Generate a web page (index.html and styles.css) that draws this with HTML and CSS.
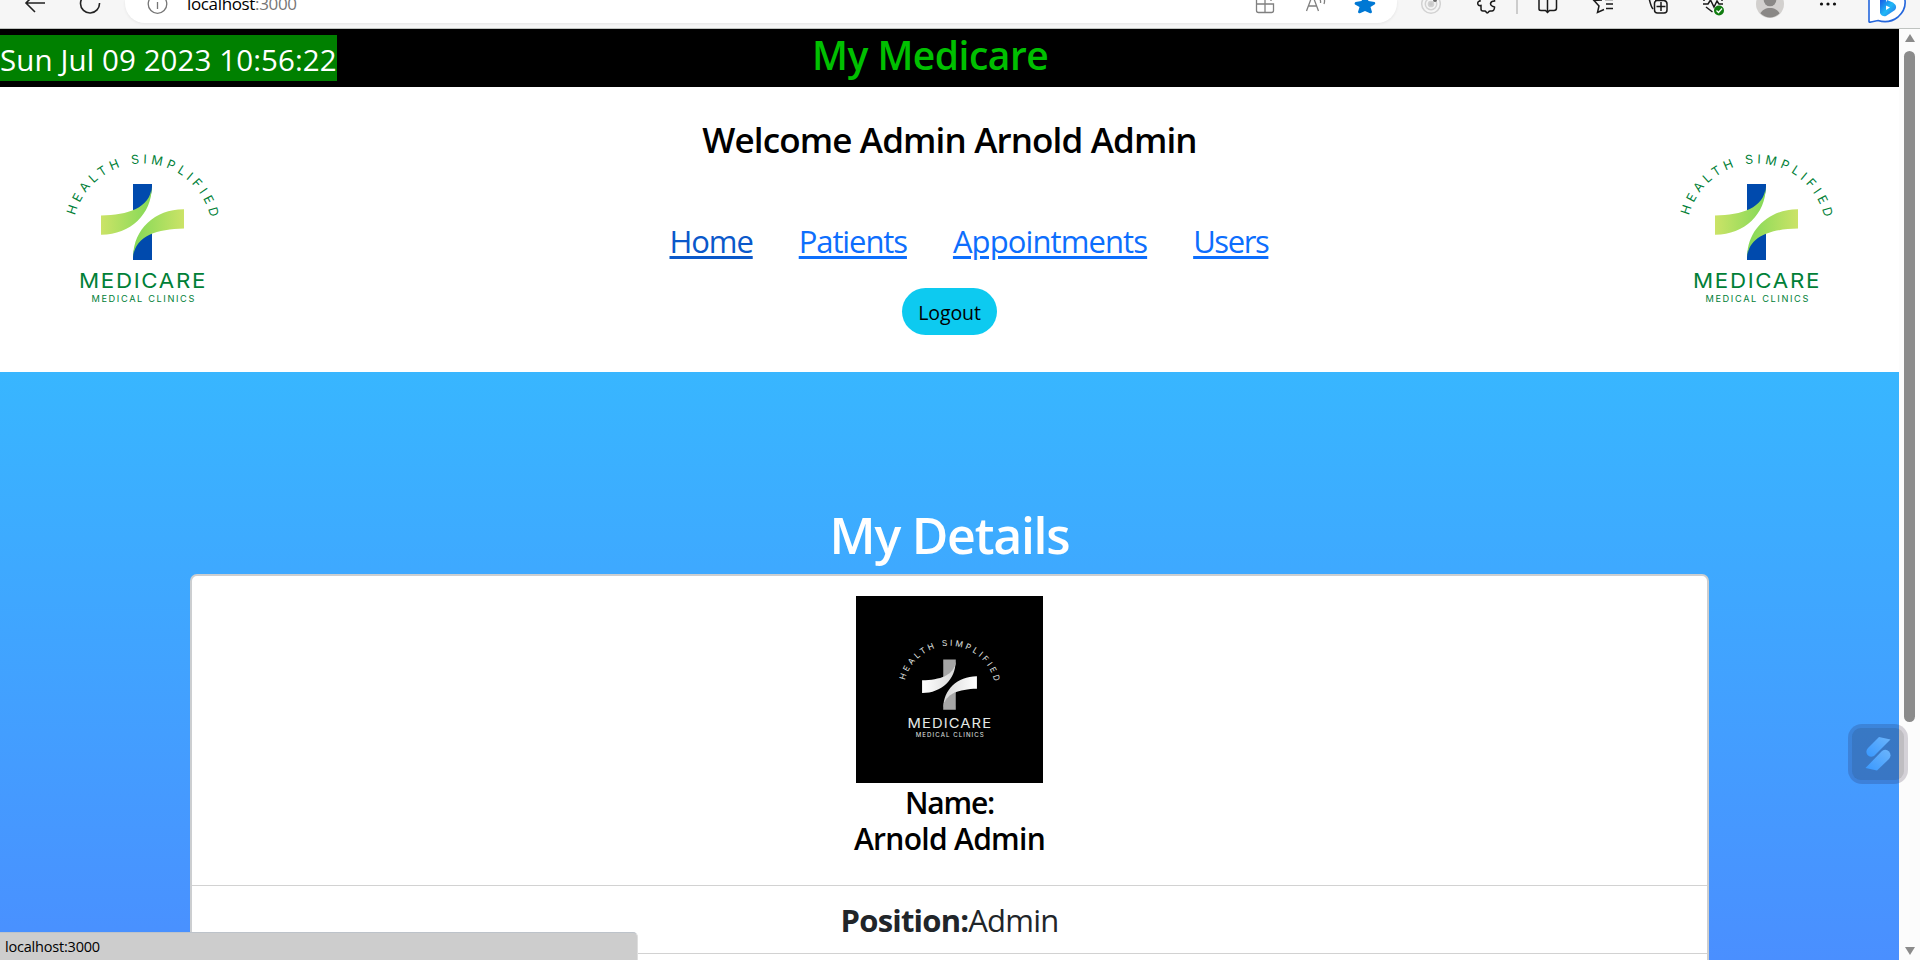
FILE: index.html
```html
<!DOCTYPE html>
<html lang="en">
<head>
<meta charset="utf-8">
<title>My Medicare</title>
<link rel="stylesheet" href="styles.css">
</head>
<body>
<div class="toolbar">
  <svg class="nav-icons" width="125" height="28" viewBox="0 0 125 28" fill="none" stroke="#222" stroke-width="1.6"><path d="M45 3H26M35 -6L26 3L35 12"/><path d="M99.500 3A9.500 9.500 0 1 1 90 -6"/></svg>
  <div class="address">
    <svg width="62" height="23" viewBox="125 0 62 23" fill="none" stroke="#767676" stroke-width="1.300"><circle cx="157.500" cy="4" r="9.300"/><path d="M157.500 2v7"/></svg>
    <span class="url">localhost<span class="port">:3000</span></span>
    <svg class="address-tools" width="147" height="23" viewBox="1250 0 147 23" fill="none" stroke="#808080" stroke-width="1.300"><path d="M1256.500 -3V10.500a2 2 0 0 0 2 2H1271.500a2 2 0 0 0 2-2V4H1256.500M1265 -3V12.500M1271 -2V1"/><path d="M1306.500 11L1312.500 -5L1318.500 11M1308.500 6H1316.500M1319 -2Q1321 0 1320.500 3M1323 -4Q1325.500 0 1324 4"/><path fill="#0078d4" stroke="none" d="M1365 -6L1368.500 1L1374.500 2Q1376 3 1374.500 4.500L1370.500 7L1372 12Q1371.500 14 1369.500 13L1365 11L1360.500 13Q1358.500 14 1358 12L1359.500 7L1355 4.500Q1354 3 1355.500 2L1361.500 1Z"/></svg>
  </div>
  <svg width="523" height="28" viewBox="1397 0 523 28" fill="none" stroke="#1a1a1a" stroke-width="1.500">
    <g stroke="#d2d2d2"><circle cx="1431" cy="4" r="9.300"/><circle cx="1431" cy="4" r="5.700"/><circle cx="1431" cy="4" r="2.600" fill="#c8c8c8"/></g><circle cx="1435" cy="0" r="2" fill="#666" stroke="none"/>
    <path d="M1480 -4V1Q1477 1.500 1478 4.500Q1478.500 6 1481 5.500V9Q1481 11 1483 11H1485Q1486 11.500 1486.500 12.500Q1487.500 13.500 1488.500 12Q1489 11 1490.500 11H1492Q1494 11 1494.500 8V7Q1490.500 6 1490.500 3.500Q1491 1 1494.500 1V-3"/>
    <path d="M1517 0V14" stroke="#ccc" stroke-width="2"/>
    <path d="M1539 -5V9Q1539 10.500 1541 10.500H1545.500L1547.500 12.500L1549.500 10.500H1554Q1556.500 10.500 1556.500 8V-5M1547.500 -5V13"/>
    <path d="M1602 0L1594 .5L1599 6L1597.500 12.500L1604 9.500M1605 -.5H1613M1606 4H1613M1606 8.500H1613"/>
    <path d="M1649 -2Q1651 7 1653 9M1655 .5H1664Q1667 1 1667 4V10Q1667 13 1664 13H1657.500Q1654.500 13 1654.500 10V3Q1655 .5 1657 .5ZM1661 2V11M1656.500 6.500H1665.500"/>
    <path d="M1703 4H1708L1710.500 0L1714 7L1717 1L1719 4H1723M1704 -1V1M1722 -1V1M1706 7L1712.500 12"/><circle cx="1719" cy="10.500" r="5" fill="#107c10" stroke="none"/><path d="M1716.500 10.500L1718.500 12.500L1722 8.500" stroke="#fff" stroke-width="1.200"/>
    <g stroke="none"><circle cx="1770" cy="4" r="14" fill="#d2d0ce"/><circle cx="1770" cy="0" r="6.300" fill="#8a8886"/><path fill="#8a8886" d="M1760.500 13.500C1763 6 1777 6 1779.500 13.500Q1770 21.500 1760.500 13.500Z"/><g fill="#111"><circle cx="1821.500" cy="4" r="1.600"/><circle cx="1828" cy="4" r="1.600"/><circle cx="1834.500" cy="4" r="1.600"/></g></g>
    <defs><linearGradient id="bing" x1="0" y1="0" x2="1" y2="1"><stop offset="0" stop-color="#174ae4"/><stop offset=".55" stop-color="#20b9f5"/><stop offset="1" stop-color="#2c6bea"/></linearGradient></defs>
    <path d="M1869 -3V21.500Q1869 22.500 1871 22L1878 20.500Q1889 24 1898 17Q1908 8 1904 -4" fill="#fff" stroke="#2466dc" stroke-width="1.600"/>
    <path d="M1880 -3L1886 -1V10L1890 7.500L1885 5L1887 0L1893 2.500Q1898 6 1895 10L1886 16Q1882 17 1880 13Z" fill="url(#bing)" stroke="none"/>
  </svg>
</div>
<div class="viewport">
  <div class="page">
    <div class="topbar"><span class="clock">Sun Jul 09 2023 10:56:22</span><h1 class="brand">My Medicare</h1></div>
    <header class="header">
      <svg class="logo" viewBox="0 0 200 190">
        <defs><path id="arcA" d="M35 85.500A69.800 69.800 0 0 1 170 85.500"/><linearGradient id="leafA"><stop offset="0" stop-color="#cbe367"/><stop offset="1" stop-color="#83d957"/></linearGradient></defs>
        <g fill="#008037"><text class="logo-arc"><textPath href="#arcA" textLength="185">HEALTH SIMPLIFIED</textPath></text><text class="logo-name" x="39" y="157.500" textLength="128" lengthAdjust="spacingAndGlyphs">MEDICARE</text><text class="logo-sub" x="51.500" y="172" textLength="104.500" lengthAdjust="spacingAndGlyphs">MEDICAL CLINICS</text></g>
        <g id="halfA"><path fill="#004aad" d="M93 54H112V60Q109 76 93 81Z"/><path fill="url(#leafA)" d="M61 85.500C88 85 110 78 111.700 57C112 84 90 105 61 104.700Z"/></g><use href="#halfA" transform="rotate(180 102.500 92)"/>
      </svg>
      <div class="header-main">
        <h2 class="welcome">Welcome Admin Arnold Admin</h2>
        <nav class="menu"><a class="active" href="#">Home</a><a class="patients" href="#">Patients</a><a class="appointments" href="#">Appointments</a><a class="users" href="#">Users</a></nav>
        <button class="logout">Logout</button>
      </div>
      <svg class="logo" viewBox="0 0 200 190">
        <g fill="#008037"><text class="logo-arc"><textPath href="#arcA" textLength="185">HEALTH SIMPLIFIED</textPath></text><text class="logo-name" x="39" y="157.500" textLength="128" lengthAdjust="spacingAndGlyphs">MEDICARE</text><text class="logo-sub" x="51.500" y="172" textLength="104.500" lengthAdjust="spacingAndGlyphs">MEDICAL CLINICS</text></g>
        <use href="#halfA"/><use href="#halfA" transform="rotate(180 102.500 92)"/>
      </svg>
    </header>
    <main class="details">
      <h2 class="details-title">My Details</h2>
      <div class="card">
        <div class="card-body">
          <svg class="photo" viewBox="-39 -42 283 283">
            <defs><linearGradient id="leafB"><stop offset="0" stop-color="#fff"/><stop offset="1" stop-color="#d8d8d8"/></linearGradient></defs>
            <g fill="#e4e9e7"><text class="logo-arc"><textPath href="#arcA" textLength="185">HEALTH SIMPLIFIED</textPath></text><text class="logo-name" x="39" y="157.500" textLength="128" lengthAdjust="spacingAndGlyphs">MEDICARE</text><text class="logo-sub" x="51.500" y="172" textLength="104.500" lengthAdjust="spacingAndGlyphs">MEDICAL CLINICS</text></g>
            <g id="halfB"><path fill="#a6a6a6" d="M93 54H112V60Q109 76 93 81Z"/><path fill="url(#leafB)" d="M61 85.500C88 85 110 78 111.700 57C112 84 90 105 61 104.700Z"/></g><use href="#halfB" transform="rotate(180 102.500 92)"/>
          </svg>
          <h3 class="name"><span class="name-label">Name:</span><br>Arnold Admin</h3>
        </div>
        <div class="row"><b>Position:</b><span>Admin</span></div>
        <div class="row"></div>
      </div>
    </main>
  </div>
  <div class="scrollbar"><i class="arrow-up"></i><i class="thumb"></i><i class="arrow-down"></i></div>
</div>
<div class="widget"><svg width="52" height="52" viewBox="1852 728 52 52"><defs><linearGradient id="s" x1="0" y1="1" x2="1" y2="0"><stop offset="0" stop-color="#3898ff"/><stop offset="1" stop-color="#6cb5fb"/></linearGradient></defs><path fill="url(#s)" d="M1879 737L1890.500 739.500L1874 756Q1870 758 1867.500 755Q1865 751.500 1868 748Z"/><path fill="url(#s)" d="M1877 770.500L1865.500 768L1882 751Q1886 748.500 1889 751.500Q1892 755 1889 759Z"/></svg></div>
<div class="status"><span>localhost:3000</span></div>
</body>
</html>
```
FILE: styles.css
```css
* { box-sizing: border-box; }
body { margin: 0; width: 1920px; height: 960px; overflow: hidden; position: relative; background: #fff; font-family: "Open Sans", "Noto Sans", sans-serif; color: #000; }
h1, h2, h3 { margin: 0; font-weight: 600; white-space: nowrap; }
svg { display: block; flex: none; }
.toolbar { display: flex; height: 29px; background: #f6f6f6; border-bottom: 1px solid #bfc3c0; overflow: hidden; }
.address { display: flex; width: 1272px; height: 23px; background: #fff; border-radius: 0 0 20px 20px; box-shadow: 0 1px 3px rgba(0,0,0,.07); }
.url { font-size: 17px; line-height: 24px; margin-top: -8px; letter-spacing: -.35px; white-space: nowrap; }
.port { color: #767676; }
.address-tools { margin-left: auto; }
.viewport { display: flex; height: 931px; overflow: hidden; }
.page { width: 1899px; height: 931px; overflow: hidden; }
.topbar { display: flex; height: 58px; background: #000; }
.clock { flex: none; width: 337px; height: 46px; margin-top: 6px; background: #008000; color: #fff; font-size: 29.500px; line-height: 50px; white-space: nowrap; letter-spacing: .1px; }
.brand { margin-left: 475px; color: #00c000; font-size: 39px; line-height: 52px; letter-spacing: -.5px; }
.header { display: flex; justify-content: space-between; height: 285px; padding: 43px 45px 0 40px; }
.logo { width: 200px; height: 190px; }
.logo-arc, .logo-name, .logo-sub { font-family: "Inter", sans-serif; }
.logo-arc { font-size: 12.500px; }
.logo-name { font-size: 20px; font-weight: 400; letter-spacing: 1.500px; }
.logo-sub { font-size: 8.500px; font-weight: 400; letter-spacing: 1.500px; }
.header-main { display: flex; flex-direction: column; align-items: center; margin: -11px 0 0 5px; }
.welcome { font-size: 35px; line-height: 42px; letter-spacing: -.85px; }
.menu { display: flex; width: 600px; margin: 56px 0 23px 40px; font-size: 31px; line-height: 48px; letter-spacing: -1.100px; gap: 46px; }
.menu a { color: #0d6efd; text-decoration-thickness: 3px; text-underline-offset: 3px; }
.menu .active { color: #0a58ca; }
.menu .appointments { letter-spacing: -.9px; }
.menu .users { letter-spacing: -1.400px; }
.logout { width: 95px; height: 47px; padding: 0; border: 0; border-radius: 24px; background: #0dcaf0; font: 19.500px/49px "Open Sans", sans-serif; letter-spacing: -.1px; color: #000; }
.details { height: 588px; padding-top: 133px; background: linear-gradient(#38b6ff, #4a8fff); }
.details-title { color: #fff; text-align: center; font-size: 50px; line-height: 60px; letter-spacing: -1.250px; margin-bottom: 9px; }
.card { width: 1519px; height: 500px; margin: 0 auto; background: #fff; border: 2px solid #ccced0; border-radius: 7px; text-align: center; }
.card-body { display: flex; flex-direction: column; align-items: center; height: 309px; padding-top: 20px; }
.photo { width: 187px; height: 187px; background: #000; }
.name { margin-top: 2px; font-size: 30px; line-height: 36px; letter-spacing: -.7px; text-align: center; }
.name-label { letter-spacing: -1.200px; }
.row { height: 68px; padding-top: 11px; border-top: 1px solid #d2d2d2; color: #212529; font-size: 31px; line-height: 46px; letter-spacing: -.8px; }
.scrollbar { display: flex; flex-direction: column; align-items: center; width: 21px; padding-top: 5px; background: #fcfcfc; }
.arrow-up, .arrow-down { border: 5.500px solid transparent; border-width: 0 5.500px; }
.arrow-up { border-bottom: 8px solid #8b8b8b; }
.arrow-down { border-top: 8px solid #8b8b8b; margin-top: 225px; }
.thumb { width: 11px; height: 671px; margin-top: 9px; border-radius: 6px; background: #8b8b8b; }
.widget { position: absolute; left: 1848px; top: 724px; width: 60px; height: 60px; border: 4px solid rgba(30,20,40,.02); border-radius: 14px; background: rgba(30,20,50,.16); }
.widget svg { border-radius: 9px; background: rgba(20,20,20,.13); }
.status { position: absolute; left: 0; top: 932px; width: 638px; height: 28px; padding-left: 5px; background: #cdcdcd; border-top: 1px solid #bdc3ca; border-right: 1px solid #dedede; border-radius: 0 5px 0 0; font-size: 14.500px; line-height: 27px; letter-spacing: -.2px; }
```
